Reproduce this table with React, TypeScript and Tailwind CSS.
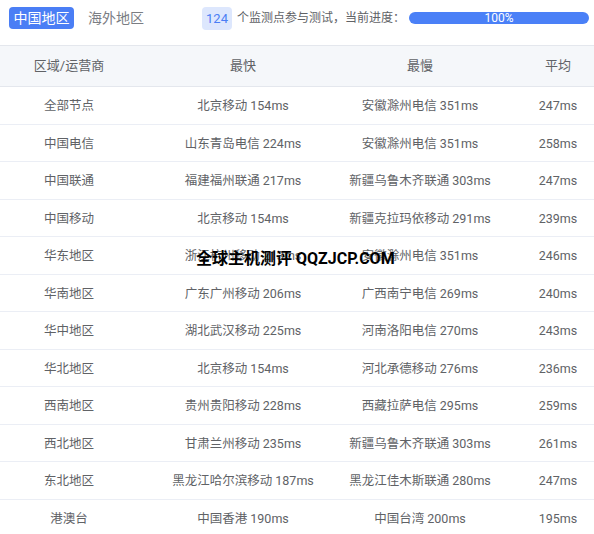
import React from "react";

interface Row {
    area: string;
    fast: string;
    slow: string;
    avg: string;
}

const rows: Row[] = [
    { area: "全部节点", fast: "北京移动 154ms", slow: "安徽滁州电信 351ms", avg: "247ms" },
    { area: "中国电信", fast: "山东青岛电信 224ms", slow: "安徽滁州电信 351ms", avg: "258ms" },
    { area: "中国联通", fast: "福建福州联通 217ms", slow: "新疆乌鲁木齐联通 303ms", avg: "247ms" },
    { area: "中国移动", fast: "北京移动 154ms", slow: "新疆克拉玛依移动 291ms", avg: "239ms" },
    { area: "华东地区", fast: "浙江杭州移动 213ms", slow: "安徽滁州电信 351ms", avg: "246ms" },
    { area: "华南地区", fast: "广东广州移动 206ms", slow: "广西南宁电信 269ms", avg: "240ms" },
    { area: "华中地区", fast: "湖北武汉移动 225ms", slow: "河南洛阳电信 270ms", avg: "243ms" },
    { area: "华北地区", fast: "北京移动 154ms", slow: "河北承德移动 276ms", avg: "236ms" },
    { area: "西南地区", fast: "贵州贵阳移动 228ms", slow: "西藏拉萨电信 295ms", avg: "259ms" },
    { area: "西北地区", fast: "甘肃兰州移动 235ms", slow: "新疆乌鲁木齐联通 303ms", avg: "261ms" },
    { area: "东北地区", fast: "黑龙江哈尔滨移动 187ms", slow: "黑龙江佳木斯联通 280ms", avg: "247ms" },
    { area: "港澳台", fast: "中国香港 190ms", slow: "中国台湾 200ms", avg: "195ms" },
];

const grid = "grid grid-cols-[138px_210px_144px_1fr] items-center";

const TopBar = () => {
    return (
        <div className="flex items-start h-[46px] border-b border-[#e4e7ed] pl-[9px] pt-[7px]">
            <span className="bg-[#4a7ef5] text-white text-[14px] rounded-[4px] w-[65px] h-[22px] flex items-center justify-center">中国地区</span>
            <span className="text-[#7a7d83] text-[14px] leading-[22px] ml-[14px]">海外地区</span>
            <span className="ml-[58px] bg-[#dde7fd] text-[#4a7ef5] text-[13px] rounded-[4px] w-[30px] h-[23px] flex items-center justify-center">124</span>
            <span className="text-[#606266] text-[12px] leading-[23px] ml-[5px]">个监测点参与测试，当前进度：</span>
            <div className="ml-[4px] mt-[5px] w-[180px] h-[12px] rounded-full bg-[#4a80f7] text-white text-[12px] leading-[12px] flex items-center justify-center">100%</div>
        </div>
    );
};

const App = () => {
    return (
        <div className="w-[594px] h-[534px] overflow-hidden bg-white font-['Roboto','Noto_Sans_CJK_SC',sans-serif] relative">
            <TopBar />
            <div className={`${grid} h-[41px] bg-[#f5f7fa] border-b border-[#e4e7ed] text-[#606266] text-[13px]`}>
                <div className="text-center">区域/运营商</div>
                <div className="text-center">最快</div>
                <div className="text-center">最慢</div>
                <div className="text-center pl-[30px]">平均</div>
            </div>
            {rows.map((r, i) => (
                <div key={i} className={`${grid} h-[37.5px] pt-[3px] border-b border-[#ebeef5] text-[#606266] text-[12.5px]`}>
                    <div className="text-center">{r.area}</div>
                    <div className="text-center">{r.fast}</div>
                    <div className="text-center">{r.slow}</div>
                    <div className="text-center pl-[30px]">{r.avg}</div>
                </div>
            ))}
            {/* watermark */}
            <div className="absolute left-[196px] top-[249px] text-black font-bold text-[16px] leading-[20px]">全球主机测评 QQZJCP.COM</div>
        </div>
    );
};

export default App;
